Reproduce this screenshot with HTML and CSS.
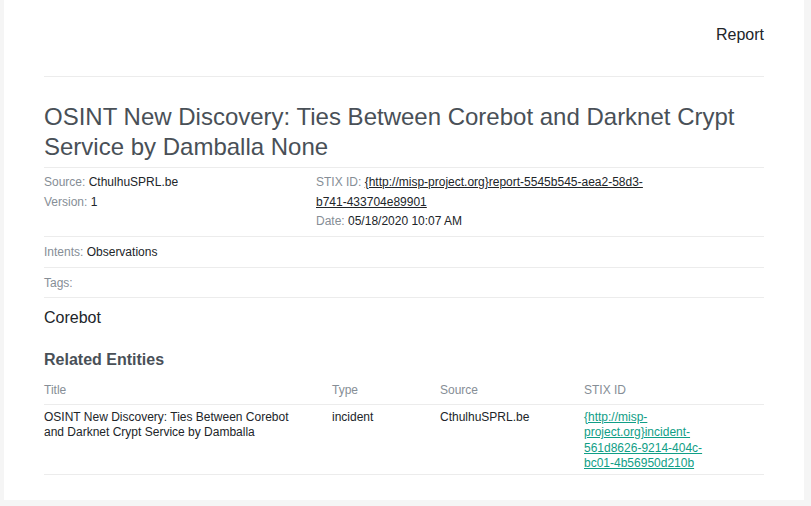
FILE: index.html
```html
<!DOCTYPE html>
<html>
<head>
<meta charset="utf-8">
<link rel="stylesheet" href="styles.css">
</head>
<body>
<div class="card">
  <header class="top">
    <span class="top-title">Report</span>
  </header>
  <h1 class="title">OSINT New Discovery: Ties Between Corebot and Darknet Crypt Service by Damballa None</h1>
  <div class="meta">
    <div class="meta-col">
      <div><span class="lbl">Source:</span> CthulhuSPRL.be</div>
      <div><span class="lbl">Version:</span> 1</div>
    </div>
    <div class="meta-col meta-right">
      <div><span class="lbl">STIX ID:</span> <a class="dark-link" href="#">{http://misp-project.org}report-5545b545-aea2-58d3-b741-433704e89901</a></div>
      <div><span class="lbl">Date:</span> 05/18/2020 10:07 AM</div>
    </div>
  </div>
  <div class="row intents"><span class="lbl">Intents:</span> Observations</div>
  <div class="row tags"><span class="lbl">Tags:</span></div>
  <div class="tag-name">Corebot</div>
  <h2 class="section">Related Entities</h2>
  <table class="entities">
    <colgroup>
      <col class="c-title"><col class="c-type"><col class="c-source"><col class="c-stix">
    </colgroup>
    <thead>
      <tr><th>Title</th><th>Type</th><th>Source</th><th>STIX ID</th></tr>
    </thead>
    <tbody>
      <tr>
        <td>OSINT New Discovery: Ties Between Corebot and Darknet Crypt Service by Damballa</td>
        <td>incident</td>
        <td>CthulhuSPRL.be</td>
        <td><a class="green-link" href="#">{http://misp-project.org}incident-561d8626-9214-404c-bc01-4b56950d210b</a></td>
      </tr>
    </tbody>
  </table>
</div>
</body>
</html>
```
FILE: styles.css
```css
html, body {
  margin: 0;
  padding: 0;
  background: #f5f5f5;
  font-family: "Liberation Sans", Arial, Helvetica, sans-serif;
  color: #212529;
}
.card {
  background: #fff;
  width: 720px;
  margin-left: 4px;
  padding: 0 40px 24px 40px;
  height: 476px;
}
.top {
  height: 77px;
  border-bottom: 1px solid #ececec;
  display: flex;
  justify-content: flex-end;
  align-items: flex-start;
  box-sizing: border-box;
}
.top-title {
  font-size: 16px;
  line-height: 24px;
  margin-top: 23px;
  color: #212529;
}
.title {
  font-size: 24px;
  font-weight: 400;
  line-height: 30px;
  color: #495057;
  margin: 0;
  padding: 25px 0 5px;
  border-bottom: 1px solid #ececec;
}
.meta {
  display: grid;
  grid-template-columns: 272px 345px;
  font-size: 12px;
  line-height: 19.5px;
  padding: 5px 0 4px;
  border-bottom: 1px solid #ececec;
}
.lbl {
  color: #868e96;
}
.dark-link {
  color: #212529;
  text-decoration: underline;
}
.row {
  font-size: 12px;
  line-height: 20px;
  border-bottom: 1px solid #ececec;
}
.intents {
  padding: 5px 0 5px;
}
.tags {
  padding: 5px 0 4px;
}
.tag-name {
  font-size: 16px;
  line-height: 24px;
  padding-top: 8px;
}
.section {
  font-size: 16px;
  font-weight: 700;
  line-height: 24px;
  color: #495057;
  margin: 18px 0 0;
}
.entities {
  width: 720px;
  table-layout: fixed;
  border-collapse: collapse;
  font-size: 12px;
  margin-top: 9px;
}
.c-title { width: 288px; }
.c-type { width: 108px; }
.c-source { width: 144px; }
.c-stix { width: 180px; }
.entities th {
  text-align: left;
  font-weight: 400;
  color: #868e96;
  line-height: 18px;
  padding: 0 0 5px;
  border-bottom: 1px solid #ececec;
}
.entities td {
  vertical-align: top;
  line-height: 15.5px;
  padding: 5px 32px 2px 0;
  border-bottom: 1px solid #ececec;
}
.entities td:last-child {
  padding-right: 50px;
}
.green-link {
  color: #109e86;
  text-decoration: underline;
}
```
